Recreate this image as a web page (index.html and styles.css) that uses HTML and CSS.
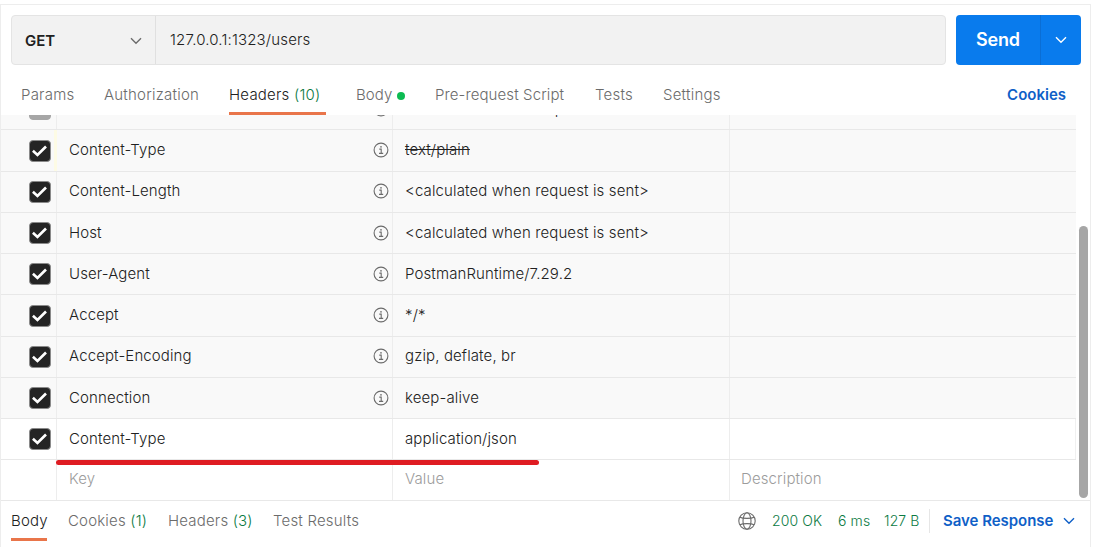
FILE: index.html
```html
<!DOCTYPE html>
<html lang="en">
<head>
<meta charset="utf-8">
<title>Request</title>
<link rel="stylesheet" href="styles.css">
</head>
<body>
<svg class="defs" width="0" height="0" aria-hidden="true">
  <symbol id="info" viewBox="0 0 16 16"><circle cx="8" cy="8" r="6.9" fill="none" stroke="currentColor" stroke-width="1.1"/><path d="M6.3 7.1h1.9v4.2M6 11.4h4.2" fill="none" stroke="currentColor" stroke-width="1.1"/><circle cx="8" cy="4.8" r=".85" fill="currentColor"/></symbol>
  <symbol id="check" viewBox="0 0 22 22"><path d="M3.2 10.8l5 4.5 9.4-9.3" fill="none" stroke="#fff" stroke-width="2.9"/></symbol>
  <symbol id="chevron" viewBox="0 0 12 8"><path d="M1 1.2l5 5 5-5" fill="none" stroke="currentColor" stroke-width="1.4"/></symbol>
</svg>
<main class="app">
  <div class="request-bar">
    <div class="request-field">
      <div class="method"><span>GET</span><svg class="chevron"><use href="#chevron"/></svg></div>
      <div class="url">127.0.0.1:1323/users</div>
    </div>
    <div class="send"><span class="send-label">Send</span><span class="send-more"><svg class="chevron"><use href="#chevron"/></svg></span></div>
  </div>
  <nav class="tabs">
    <span class="tab t-params">Params</span>
    <span class="tab t-auth">Authorization</span>
    <span class="tab t-headers active">Headers <b>(10)</b></span>
    <span class="tab t-body">Body<i class="dot"></i></span>
    <span class="tab t-pre">Pre-request Script</span>
    <span class="tab t-tests">Tests</span>
    <span class="tab t-settings">Settings</span>
    <span class="cookies">Cookies</span>
  </nav>
  <section class="headers">
    <div class="table">
      <div class="row auto"><div class="cell pick"><span class="box dim"></span></div><div class="cell"><svg class="info"><use href="#info"/></svg></div><div class="cell">&lt;calculated when request is sent&gt;</div><div class="cell"></div></div>
      <div class="row auto first"><div class="cell pick"><svg class="box"><use href="#check"/></svg></div><div class="cell">Content-Type<svg class="info"><use href="#info"/></svg></div><div class="cell"><s>text/plain</s></div><div class="cell"></div></div>
      <div class="row auto"><div class="cell pick"><svg class="box"><use href="#check"/></svg></div><div class="cell">Content-Length<svg class="info"><use href="#info"/></svg></div><div class="cell">&lt;calculated when request is sent&gt;</div><div class="cell"></div></div>
      <div class="row auto"><div class="cell pick"><svg class="box"><use href="#check"/></svg></div><div class="cell">Host<svg class="info"><use href="#info"/></svg></div><div class="cell">&lt;calculated when request is sent&gt;</div><div class="cell"></div></div>
      <div class="row auto"><div class="cell pick"><svg class="box"><use href="#check"/></svg></div><div class="cell">User-Agent<svg class="info"><use href="#info"/></svg></div><div class="cell">PostmanRuntime/7.29.2</div><div class="cell"></div></div>
      <div class="row auto"><div class="cell pick"><svg class="box"><use href="#check"/></svg></div><div class="cell">Accept<svg class="info"><use href="#info"/></svg></div><div class="cell">*/*</div><div class="cell"></div></div>
      <div class="row auto"><div class="cell pick"><svg class="box"><use href="#check"/></svg></div><div class="cell">Accept-Encoding<svg class="info"><use href="#info"/></svg></div><div class="cell">gzip, deflate, br</div><div class="cell"></div></div>
      <div class="row auto"><div class="cell pick"><svg class="box"><use href="#check"/></svg></div><div class="cell">Connection<svg class="info"><use href="#info"/></svg></div><div class="cell">keep-alive</div><div class="cell"></div></div>
      <div class="row marked"><div class="cell pick"><svg class="box"><use href="#check"/></svg></div><div class="cell">Content-Type</div><div class="cell">application/json</div><div class="cell"></div><i class="marker"></i></div>
      <div class="row blank"><div class="cell pick"></div><div class="cell">Key</div><div class="cell">Value</div><div class="cell">Description</div></div>
    </div>
    <div class="scroll"><div class="thumb"></div></div>
  </section>
  <footer class="response">
    <span class="rtab r-body active">Body</span>
    <span class="rtab r-cookies">Cookies <b>(1)</b></span>
    <span class="rtab r-headers">Headers <b>(3)</b></span>
    <span class="rtab r-tests">Test Results</span>
    <div class="status">
      <svg class="globe" viewBox="0 0 18 18"><g fill="none" stroke="currentColor" stroke-width="1.1"><circle cx="9" cy="9" r="8.2"/><ellipse cx="9" cy="9" rx="4" ry="8.2"/><path d="M1.8 5.2C5 6.8 13 6.8 16.2 5.2M1.8 12.8c3.2-1.6 11.2-1.6 14.4 0"/></g></svg>
      <span class="code">200 OK</span><span class="time">6 ms</span><span class="size">127 B</span>
      <span class="save"><span>Save Response</span><svg class="chevron"><use href="#chevron"/></svg></span>
    </div>
  </footer>
</main>
</body>
</html>
```

FILE: styles.css
```css
* { box-sizing: border-box; }
body { margin: 0; background: #fff; font: 350 15px/20px Inter, "Liberation Sans", sans-serif; color: #212121; overflow: hidden; }
.defs { position: absolute; }
svg { display: block; flex: none; }
b { font-weight: inherit; color: #0b7a43; }
.app { width: 1091px; height: 547px; margin-top: 4px; border: 1px solid #ededed; border-bottom: 0; display: flex; flex-direction: column; white-space: nowrap; }
.chevron { width: 12px; height: 8px; }

.request-bar { display: flex; gap: 10px; padding: 10px 9px 0 10px; height: 60px; flex: none; }
.request-field { display: flex; width: 935px; background: #f2f2f2; border: 1px solid #e4e4e4; border-radius: 4px; }
.method { display: flex; align-items: center; justify-content: space-between; width: 144px; padding: 1px 13px 0 13px; border-right: 1px solid #e0e0e0; font-weight: 600; }
.method .chevron { color: #6b6b6b; }
.url { padding: 14px 14px; letter-spacing: .17px; }
.send { display: flex; width: 125px; background: #097bed; border-radius: 4px; color: #fff; }
.send-label { width: 85px; border-right: 1px solid #0a6ed5; text-align: center; font-weight: 600; font-size: 18px; line-height: 50px; letter-spacing: -.2px; }
.send-more { flex: 1; display: flex; align-items: center; justify-content: center; }

.tabs { display: flex; gap: 30px; height: 50px; flex: none; padding-left: 20px; color: #6b6b6b; letter-spacing: .22px; }
.tab { position: relative; padding-top: 20px; }
.t-params { width: 53px; } .t-auth { width: 95px; } .t-headers { width: 97px; } .t-body { width: 49px; letter-spacing: .1px; }
.t-pre { width: 130px; letter-spacing: .1px; } .t-tests { width: 38px; } .t-settings { width: 58px; }
.active { color: #212121; border-bottom: 3px solid #e9754a; }
.dot { display: inline-block; width: 8px; height: 8px; margin-left: 5px; border-radius: 50%; background: #0cbb52; }
.cookies { margin: 20px 24px 0 auto; color: #0f5fc7; font-weight: 600; letter-spacing: 0; }

.headers { display: flex; height: 386px; flex: none; overflow: hidden; }
.table { width: 1075px; margin-top: -25.85px; }
.row { position: relative; display: grid; grid-template-columns: 56px 336px 337px 346px; height: 41.25px; border-bottom: 1px solid #e8e8e8; letter-spacing: .12px; }
.auto { background: #f9f9f9; }
.cell { display: flex; align-items: center; padding: 0 3.5px 1px 12px; border-right: 1px solid #ededed; }
.cell:last-of-type { border-right: 0; }
.marked .cell:last-of-type { border-right: 1px solid #f0f0f0; }
.pick { padding: 0 0 0 28px; }
.first .pick { border-right: 3px solid #fdfbe5; }
.box { width: 22px; height: 22px; border-radius: 4px; background: #242424; border: 1px solid #8a8a8a; }
.dim { background: #a6a6a6; border-color: #a6a6a6; }
.info { width: 16px; height: 16px; margin-left: auto; color: #6b6b6b; }
.blank { width: 1090px; height: 41px; color: #9c9c9c; }
.blank .cell { padding-bottom: 3px; }
.blank .cell:last-of-type { padding-left: 11px; }
.marker { position: absolute; left: 55px; bottom: -6px; width: 483px; height: 5px; border-radius: 3px; background: #df1c22; z-index: 1; }
.scroll { flex: 1; padding: 111px 0 0 3px; }
.thumb { width: 9px; height: 272px; border-radius: 5px; background: #a6a6a6; position: relative; }

.response { display: flex; height: 46px; flex: none; padding-left: 10px; gap: 21px; color: #6b6b6b; letter-spacing: .18px; }
.rtab { height: 40px; padding-top: 10px; }
.r-body { width: 36px; } .r-cookies { width: 79px; } .r-headers { width: 84px; } .r-tests { width: 85px; }
.status { display: flex; flex: 1; align-items: center; padding: 0 15px 7px 0; justify-content: flex-end; color: #0b7a43; font-size: 14px; letter-spacing: .12px; }
.globe { width: 18px; height: 18px; color: #6b6b6b; margin-right: 16px; }
.code { width: 50px; margin-right: 16px; } .time { width: 31px; margin-right: 15px; } .size { width: 35px; margin-right: 10px; }
.save { display: flex; align-items: center; justify-content: space-between; width: 146px; height: 24px; padding-left: 13px; border-left: 1px solid #e6e6e6; color: #0f5fc7; font-size: 15px; font-weight: 600; letter-spacing: -.03px; }
```
